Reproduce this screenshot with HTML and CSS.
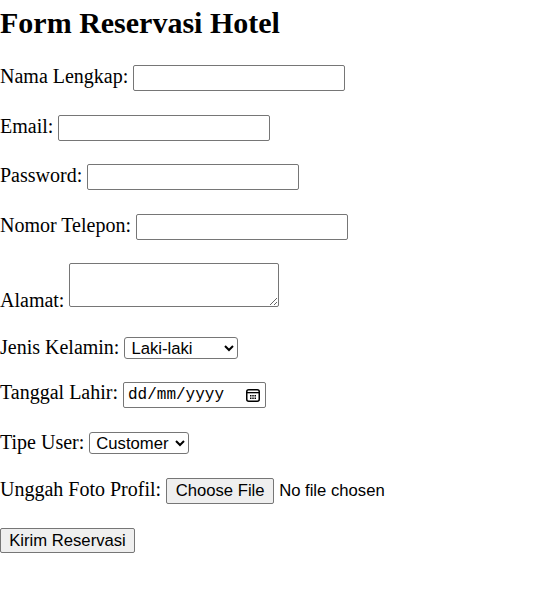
FILE: index.html
```html
<!DOCTYPE html>
<html lang="id">
<head>
<meta charset="utf-8">
<title>Form Reservasi Hotel</title>
<link rel="stylesheet" href="styles.css">
</head>
<body>
<h2 class="title">Form Reservasi Hotel</h2>
<form class="form">
  <div class="row"><label for="nama">Nama Lengkap:</label> <input class="ctl" type="text" id="nama"></div>
  <div class="row"><label for="email">Email:</label> <input class="ctl" type="email" id="email"></div>
  <div class="row"><label for="pw">Password:</label> <input class="ctl" type="password" id="pw"></div>
  <div class="row"><label for="tel">Nomor Telepon:</label> <input class="ctl" type="tel" id="tel"></div>
  <div class="row"><label for="alamat">Alamat:</label> <textarea class="area" id="alamat"></textarea></div>
  <div class="row row-tight"><label for="jk">Jenis Kelamin:</label> <select class="sel sel-jk" id="jk"><option>Laki-laki</option><option>Perempuan</option></select></div>
  <div class="row row-tight"><label>Tanggal Lahir:</label> <span class="date" role="textbox" aria-label="Tanggal Lahir"><span class="date-text">dd/mm/yyyy</span><svg class="cal" width="14" height="13" viewBox="0 0 14 13" aria-hidden="true"><rect x="0.75" y="0.75" width="12.5" height="11.5" rx="2" fill="none" stroke="#000" stroke-width="1.5"/><rect x="1" y="3" width="12" height="1.3" fill="#000"/><rect x="4" y="6" width="1.5" height="1.5" fill="#000"/><rect x="6.25" y="6" width="1.5" height="1.5" fill="#000"/><rect x="8.5" y="6" width="1.5" height="1.5" fill="#000"/><rect x="4" y="8.5" width="1.5" height="1.5" fill="#000"/><rect x="6.25" y="8.5" width="1.5" height="1.5" fill="#000"/><rect x="8.5" y="8.5" width="1.5" height="1.5" fill="#000"/></svg></span></div>
  <div class="row row-loose"><label for="tipe">Tipe User:</label> <select class="sel sel-tipe" id="tipe"><option>Customer</option><option>Admin</option></select></div>
  <div class="row"><label for="foto">Unggah Foto Profil:</label> <input class="file" type="file" id="foto"></div>
  <div class="row"><button class="btn" type="submit">Kirim Reservasi</button></div>
</form>
</body>
</html>
```
FILE: styles.css
```css
html, body {
  margin: 0;
  padding: 0;
  background: #fff;
}
body {
  font-family: "Liberation Serif", "Times New Roman", serif;
  font-size: 20px;
  color: #000;
}
.title {
  font-size: 30px;
  font-weight: bold;
  margin: 6px 0 25px;
}
.form {
  margin: 0;
}
.row {
  margin-bottom: 23.5px;
}
.row-tight {
  margin-bottom: 22.5px;
}
.row-loose {
  margin-bottom: 24.5px;
}
.ctl, .area, .sel, .file, .btn, .date {
  font-family: "Liberation Sans", Arial, sans-serif;
  font-size: 16.67px;
  color: #000;
  box-sizing: border-box;
}
.ctl {
  width: 212px;
  height: 26px;
  margin: 0;
  padding: 1px 3px;
  border: 1px solid #767676;
  border-radius: 2px;
  background: #fff;
}
.area {
  width: 210px;
  height: 44px;
  margin: 0;
  padding: 2px;
  border: 1px solid #767676;
  border-radius: 2px;
  font-family: "Liberation Mono", monospace;
  vertical-align: baseline;
}
.sel {
  height: 22px;
  margin: 0;
  padding: 0 0 0 2px;
  border: 1px solid #767676;
  border-radius: 3px;
  background-color: #fff;
}
.sel-jk {
  width: 114px;
}
.sel-tipe {
  width: 100px;
}
.date {
  display: inline-flex;
  align-items: center;
  width: 143px;
  height: 26px;
  padding: 0 5px 0 4px;
  border: 1px solid #767676;
  border-radius: 2px;
  background: #fff;
  vertical-align: baseline;
}
.date-text {
  font-family: "Liberation Mono", "DejaVu Sans Mono", monospace;
  font-size: 16px;
  line-height: 18px;
  flex: 1;
}
.cal {
  display: block;
}
.file {
  margin: 0;
}
.file::file-selector-button {
  font-family: "Liberation Sans", Arial, sans-serif;
  font-size: 16.67px;
  width: 108px;
  height: 26px;
  margin: 0 5px 0 0;
  padding: 0;
  border: 1px solid #767676;
  border-radius: 2px;
  background: #efefef;
  color: #000;
}
.btn {
  width: 135px;
  height: 25px;
  margin: 0;
  padding: 0;
  border: 1px solid #767676;
  border-radius: 2px;
  background: #efefef;
}
```
